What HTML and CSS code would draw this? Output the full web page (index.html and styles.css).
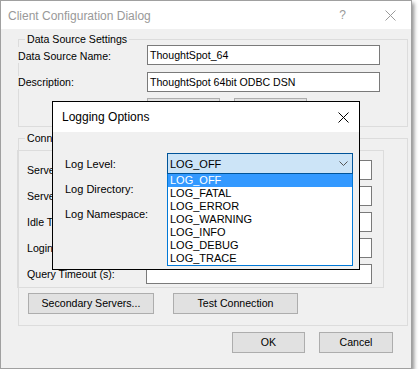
FILE: index.html
```html
<!DOCTYPE html>
<html>
<head>
<meta charset="utf-8">
<link rel="stylesheet" href="styles.css">
</head>
<body>
<div class="window">
  <div class="titlebar">
    <span class="title">Client Configuration Dialog</span>
    <span class="help">?</span>
    <svg class="wclose" width="11" height="11" viewBox="0 0 11 11"><path d="M0.5 0.5 L10.5 10.5 M10.5 0.5 L0.5 10.5" stroke="#9a9a9a" stroke-width="1" fill="none"/></svg>
  </div>
  <div class="body">
    <div class="group g1">
      <div class="legend">Data Source Settings</div>
      <div class="row r1"><span class="lbl lbl-low">Data Source Name:</span><div class="input wide">ThoughtSpot_64</div></div>
      <div class="row r2"><span class="lbl">Description:</span><div class="input wide">ThoughtSpot 64bit ODBC DSN</div></div>
      <div class="btnrow1"><div class="btn b73">Logging...</div><div class="btn b73">Advanced...</div></div>
    </div>
    <div class="group g2">
      <div class="legend">Connection Settings</div>
      <div class="inner">
        <div class="crow"><span class="clbl">Server(s):</span><div class="input narrow"></div></div>
        <div class="crow"><span class="clbl">Server Port:</span><div class="input narrow"></div></div>
        <div class="crow"><span class="clbl">Idle Timeout (s):</span><div class="input narrow"></div></div>
        <div class="crow"><span class="clbl">Login Timeout (s):</span><div class="input narrow"></div></div>
        <div class="crow"><span class="clbl">Query Timeout (s):</span><div class="input narrow"></div></div>
      </div>
      <div class="btnrow2"><div class="btn bsec">Secondary Servers...</div><div class="btn btest">Test Connection</div></div>
    </div>
    <div class="footer"><div class="btn bok">OK</div><div class="btn bcancel">Cancel</div></div>
  </div>

  <div class="modal">
    <div class="mtitle">
      <span>Logging Options</span>
      <svg class="mclose" width="11" height="11" viewBox="0 0 11 11"><path d="M0.5 0.5 L10.5 10.5 M10.5 0.5 L0.5 10.5" stroke="#000" stroke-width="1" fill="none"/></svg>
    </div>
    <div class="mbody">
      <div class="mrow"><span class="mlbl">Log Level:</span>
        <div class="combo">
          <span>LOG_OFF</span>
          <svg class="chev" width="9" height="5" viewBox="0 0 9 5"><path d="M0.5 0.5 L4.5 4.5 L8.5 0.5" stroke="#555" stroke-width="1" fill="none"/></svg>
          <ul class="list">
            <li class="sel">LOG_OFF</li>
            <li>LOG_FATAL</li>
            <li>LOG_ERROR</li>
            <li>LOG_WARNING</li>
            <li>LOG_INFO</li>
            <li>LOG_DEBUG</li>
            <li>LOG_TRACE</li>
          </ul>
        </div>
      </div>
      <div class="mrow"><span class="mlbl">Log Directory:</span><div class="minput"></div></div>
      <div class="mrow"><span class="mlbl">Log Namespace:</span><div class="minput"></div></div>
    </div>
  </div>
</div>
</body>
</html>
```

FILE: styles.css
```css
* { box-sizing: border-box; }
body {
  margin: 0;
  background: #ffffff;
  font-family: "Liberation Sans", Arial, sans-serif;
  font-size: 10.6px;
  color: #000;
}
.window {
  position: relative;
  width: 412px;
  height: 369px;
  border: 1px solid #a0a0a0;
  background: #f0f0f0;
  box-shadow: 2px 3px 4px rgba(0,0,0,0.45);
}
.titlebar {
  height: 28px;
  background: #fff;
  display: flex;
  align-items: center;
  padding-left: 7px;
}
.title {
  font-size: 12px;
  color: #999;
  flex: 1;
  padding-top: 1px;
}
.help {
  font-size: 12px;
  color: #999;
  margin-right: 39px;
}
.wclose { margin-right: 15px; }

.body {
  padding: 10px 3px 0 17px;
}
.group {
  border: 1px solid #dcdcdc;
}
.legend {
  width: max-content;
  margin: -7px 0 0 6px;
  padding: 0 2px;
  height: 13px;
  line-height: 13px;
  background: #f0f0f0;
}
.row {
  display: flex;
  align-items: center;
  margin-left: -1px;
  height: 20px;
}
.r1 { margin-top: -1px; }
.r2 { margin-top: 7px; }
.lbl {
  width: 129px;
  background: #f0f0f0;
  line-height: 13px;
}
.lbl-low { padding-top: 3px; }
.input {
  height: 20px;
  background: #fff;
  border: 1px solid #7a7a7a;
  padding-left: 2px;
  line-height: 18px;
  white-space: nowrap;
}
.wide { width: 233px; }
.narrow { width: 226px; }
.btn {
  height: 21px;
  background: #e1e1e1;
  border: 1px solid #adadad;
  display: flex;
  align-items: center;
  justify-content: center;
  line-height: 13px;
  white-space: nowrap;
  overflow: hidden;
}
.btnrow1 {
  display: flex;
  gap: 14px;
  margin: 6px 0 7px 128px;
}
.b73 { width: 73px; }

.g2 { margin-top: 11px; padding-bottom: 11px; }
.inner {
  margin: 5px 23px 0 -2px;
  border: 1px solid #dcdcdc;
  padding: 9px 0 3px 0;
  display: flex;
  flex-direction: column;
  gap: 6px;
}
.crow {
  display: flex;
  align-items: center;
  height: 20px;
}
.clbl {
  width: 128px;
  padding-left: 9px;
  line-height: 13px;
  white-space: nowrap;
}
.btnrow2 {
  display: flex;
  margin: 5px 0 0 9px;
}
.bsec { width: 126px; }
.btest { width: 125px; margin-left: 19px; }

.footer {
  display: flex;
  justify-content: flex-end;
  gap: 14px;
  margin: 6px 15px 0 0;
}
.bok { width: 73px; }
.bcancel { width: 74px; }

/* Overlay dialog */
.modal {
  position: absolute;
  left: 51px;
  top: 100px;
  width: 308px;
  height: 169px;
  border: 1px solid #000;
  background: #f0f0f0;
}
.mtitle {
  height: 30px;
  background: #fff;
  display: flex;
  align-items: center;
  padding-left: 9px;
  font-size: 12px;
}
.mtitle span { flex: 1; }
.mclose { margin-right: 10px; }
.mbody {
  padding: 21px 0 0 12px;
  display: flex;
  flex-direction: column;
  gap: 4px;
  font-size: 11px;
}
.mrow {
  display: flex;
  align-items: center;
  height: 21px;
}
.mlbl { width: 102px; }
.minput {
  width: 186px;
  height: 20px;
  background: #fff;
  border: 1px solid #7a7a7a;
}
.combo {
  position: relative;
  width: 186px;
  height: 21px;
  border: 1px solid #005499;
  background: #cce4f7;
  display: flex;
  align-items: center;
  padding-left: 2px;
}
.combo span { flex: 1; }
.chev { margin-right: 4px; }
.list {
  position: absolute;
  z-index: 2;
  left: -1px;
  top: 20px;
  width: 186px;
  margin: 0;
  padding: 0;
  list-style: none;
  background: #fff;
  border: 1px solid #0078d7;
  border-top: 0;
}
.list li {
  height: 13px;
  line-height: 13px;
  padding-left: 2px;
}
.list li.sel {
  background: #3399ff;
  color: #fff;
}
```
